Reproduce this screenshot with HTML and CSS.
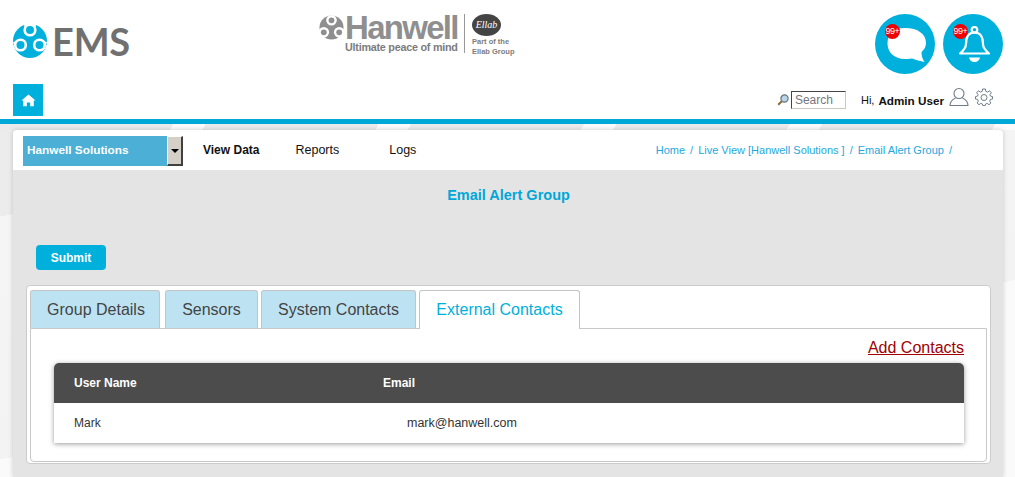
FILE: index.html
```html
<!DOCTYPE html>
<html lang="en">
<head>
    <meta charset="UTF-8">
    <title>Email Alert Group</title>
    <link rel="stylesheet" href="styles.css">
</head>
<body>
    <header class="site-header">
        <div class="brand-row">
            <div class="ems-logo">
                <svg class="ems-mark" viewBox="0 0 34 34" width="34" height="34">
                    <circle cx="17" cy="17" r="17" fill="#00b0dc"/>
                    <path d="M11 0 L23 0 L22 6 L12 6 Z" fill="#fff"/>
                    <path d="M0 18 L4 27 L7 24 L5 17 Z" fill="#fff"/>
                    <path d="M34 18 L30 27 L27 24 L29 17 Z" fill="#fff"/>
                    <circle cx="17" cy="6" r="6.6" fill="#fff"/>
                    <circle cx="17" cy="6" r="4" fill="#00b0dc"/>
                    <circle cx="7.5" cy="21" r="6.6" fill="#fff"/>
                    <circle cx="7.5" cy="21" r="4" fill="#00b0dc"/>
                    <circle cx="26.5" cy="21" r="6.6" fill="#fff"/>
                    <circle cx="26.5" cy="21" r="4" fill="#00b0dc"/>
                </svg>
                <span class="ems-text">EMS</span>
            </div>
            <div class="hanwell-logo">
                <svg class="hanwell-mark" viewBox="0 0 26 26" width="25" height="25">
                    <circle cx="13" cy="13" r="12.5" fill="#8f8f8f"/>
                    <circle cx="13" cy="5.5" r="5.5" fill="#fff"/>
                    <circle cx="13" cy="5.5" r="3" fill="#8f8f8f"/>
                    <circle cx="5" cy="18" r="5.5" fill="#fff"/>
                    <circle cx="5" cy="18" r="3" fill="#8f8f8f"/>
                    <circle cx="21" cy="18" r="5.5" fill="#fff"/>
                    <circle cx="21" cy="18" r="3" fill="#8f8f8f"/>
                </svg>
                <div class="hanwell-words">
                    <div class="hanwell-name">Hanwell</div>
                    <div class="hanwell-tag">Ultimate peace of mind</div>
                </div>
                <div class="ellab">
                    <div class="ellab-badge">Ellab</div>
                    <div class="ellab-note">Part of the<br>Ellab Group</div>
                </div>
            </div>
            <div class="round-icons">
                <div class="round-icon">
                    <span class="count">99+</span>
                    <svg viewBox="0 0 60 60" width="60" height="60">
                        <path d="M30 14 C43 14 51 20 51 29 C51 33 49 36 46.5 38 C46.5 42 47.5 45 49.5 48 C45 47 41 46 37 44.5 C34 45 32 45 30 45 C19 45 12.5 38 12.5 29.5 C12.5 20 19 14 30 14 Z" fill="#fff"/>
                    </svg>
                </div>
                <div class="round-icon">
                    <span class="count">99+</span>
                    <svg viewBox="0 0 60 60" width="60" height="60">
                        <g fill="none" stroke="#fff" stroke-width="2.2">
                            <circle cx="31.5" cy="15.8" r="2.8"/>
                            <path d="M23 30 C23 22 26 18.5 31.5 18.5 C37 18.5 40 22 40 30 C40 34 43 37 46 39.5 L17 39.5 C20 37 23 34 23 30 Z" stroke-linejoin="round"/>
                        </g>
                        <path d="M26 43.5 L37 43.5 C36 47 34 48 31.5 48 C29 48 27 47 26 43.5 Z" fill="#fff"/>
                    </svg>
                </div>
            </div>
        </div>
        <div class="tool-row">
            <a class="home-btn" href="#">
                <svg viewBox="0 0 16 16" width="15" height="15">
                    <path d="M8 1.5 L15.5 8 L13.6 8 L13.6 14 L9.8 14 L9.8 10 L6.2 10 L6.2 14 L2.4 14 L2.4 8 L0.5 8 Z" fill="#fff"/>
                </svg>
            </a>
            <div class="user-tools">
                <svg class="search-icon" viewBox="0 0 12 12" width="12" height="12">
                    <circle cx="7.5" cy="4.5" r="3.6" fill="#b9d6e8" stroke="#66727c" stroke-width="1.2"/>
                    <path d="M4.8 7.2 L1.2 10.8" stroke="#8a6a3a" stroke-width="2"/>
                </svg>
                <input class="search-box" type="text" placeholder="Search">
                <span class="hi">Hi,</span>
                <span class="user-name">Admin User</span>
                <svg class="user-icon" viewBox="0 0 20 20" width="20" height="20">
                    <circle cx="10" cy="6.5" r="5" fill="none" stroke="#6f7c88" stroke-width="1.1"/>
                    <path d="M6.5 11 C3 12.5 1.2 15 1 18.5 L19 18.5 C18.8 15 17 12.5 13.5 11" fill="none" stroke="#6f7c88" stroke-width="1.1"/>
                </svg>
                <svg class="gear-icon" viewBox="0 0 18 18" width="18" height="18">
                    <path d="M7.6 1 L10.4 1 L10.8 3.3 L12.6 4.1 L14.6 2.8 L16.4 4.8 L14.9 6.6 L15.5 8.1 L17.5 8.6 L17.5 11 L15.4 11.4 L14.7 13.1 L15.9 15 L14 16.7 L12.2 15.4 L10.6 16 L10.2 17.6 L7.8 17.6 L7.4 16 L5.8 15.4 L4 16.7 L2.1 15 L3.3 13.1 L2.6 11.4 L0.5 11 L0.5 8.6 L2.5 8.1 L3.1 6.6 L1.6 4.8 L3.4 2.8 L5.4 4.1 L7.2 3.3 Z" fill="none" stroke="#6f7c88" stroke-width="1" stroke-linejoin="round"/>
                    <circle cx="9" cy="9.5" r="3" fill="none" stroke="#6f7c88" stroke-width="1"/>
                </svg>
            </div>
        </div>
    </header>

    <main class="page">
        <nav class="top-nav">
            <div class="site-select">
                <span class="site-name">Hanwell Solutions</span>
                <span class="site-arrow"></span>
            </div>
            <a class="nav-link nav-active" href="#">View Data</a>
            <a class="nav-link nav-reports" href="#">Reports</a>
            <a class="nav-link nav-logs" href="#">Logs</a>
            <div class="crumbs">
                <a href="#">Home</a><span>/</span>
                <a href="#">Live View [Hanwell Solutions ]</a><span>/</span>
                <a href="#">Email Alert Group</a><span>/</span>
            </div>
        </nav>

        <section class="content">
            <h1 class="page-title">Email Alert Group</h1>
            <button class="submit-btn" type="button">Submit</button>

            <div class="tab-box">
                <ul class="tabs">
                    <li class="tab tab-group">Group Details</li>
                    <li class="tab tab-sensors">Sensors</li>
                    <li class="tab tab-system">System Contacts</li>
                    <li class="tab tab-current">External Contacts</li>
                </ul>
                <div class="tab-panel">
                    <div class="add-row"><a class="add-link" href="#">Add Contacts</a></div>
                    <div class="contact-table">
                        <div class="table-head">
                            <div class="col-name">User Name</div>
                            <div class="col-email">Email</div>
                        </div>
                        <div class="table-row">
                            <div class="col-name">Mark</div>
                            <div class="col-email cell-email">mark@hanwell.com</div>
                        </div>
                    </div>
                </div>
            </div>
        </section>
    </main>
</body>
</html>
```

FILE: styles.css
```css
html, body {
    height: 100%;
}

body {
    margin: 0;
    height: 477px;
    overflow: hidden;
    font-family: "Liberation Sans", Arial, sans-serif;
    font-size: 12px;
    color: #111;
    background-color: #ececec;
    /* faint polygon texture behind the card */
    background-image:
        repeating-linear-gradient(120deg, #ebebeb 0 150px, #fbfbfb 150px 178px),
        linear-gradient(170deg, #ececec 33%, #f5f5f5 33%, #f3f3f3 70%, #fafafa 70%);
    background-size: 100% 6px, 100% 100%;
    background-position: 0 124px, 0 0;
    background-repeat: no-repeat;
}

a {
    text-decoration: none;
}

.site-header {
    height: 119px;
    background: #fff;
    border-bottom: 5px solid #00a8d8;
}

.brand-row {
    display: flex;
    height: 84px;
    padding: 0 12px 0 13px;
}

.ems-logo {
    display: flex;
    align-items: center;
    width: 306px;
    height: 81px;
}

.ems-mark {
    flex: none;
}

.ems-text {
    margin-left: 5px;
    font-family: "Lato", sans-serif;
    font-size: 38px;
    font-weight: 700;
    letter-spacing: -0.2px;
    color: #707070;
}

.hanwell-logo {
    display: flex;
    width: 556px;
    padding-top: 14px;
    box-sizing: border-box;
}

.hanwell-mark {
    flex: none;
    margin-top: 1px;
}

.hanwell-words {
    margin-left: 1px;
    width: 119px;
    height: 39px;
    border-right: 1px solid #999;
}

.hanwell-name {
    font-size: 33px;
    line-height: 27px;
    font-weight: 700;
    letter-spacing: -1.7px;
    color: #8f8f8f;
}

.hanwell-tag {
    margin-top: 0;
    font-size: 10.8px;
    line-height: 13px;
    font-weight: 700;
    letter-spacing: -0.25px;
    color: #7c7c7c;
}

.ellab {
    margin-left: 7px;
}

.ellab-badge {
    width: 29px;
    height: 22px;
    border-radius: 50%;
    background: #444;
    color: #fff;
    font-family: "Liberation Serif", serif;
    font-style: italic;
    font-size: 10px;
    line-height: 22px;
    text-align: center;
}

.ellab-note {
    margin-top: 1px;
    font-size: 7.5px;
    line-height: 10px;
    font-weight: 700;
    color: #7c7c7c;
}

.round-icons {
    display: flex;
    gap: 8px;
    padding-top: 14px;
}

.round-icon {
    position: relative;
    width: 60px;
    height: 60px;
    border-radius: 50%;
    background: #00b0dc;
}

.round-icon svg {
    display: block;
}

.count {
    position: absolute;
    top: 10px;
    left: 10px;
    width: 15px;
    height: 15px;
    border-radius: 50%;
    background: #f00000;
    color: #fff;
    font-size: 9px;
    line-height: 15px;
    text-align: center;
    letter-spacing: -0.5px;
}

.tool-row {
    display: flex;
    justify-content: space-between;
    padding: 0 22px 0 13px;
}

.home-btn {
    display: flex;
    align-items: center;
    justify-content: center;
    width: 30px;
    height: 32px;
    background: #00b0dc;
}

.user-tools {
    display: flex;
    align-items: center;
    height: 32px;
}

.search-icon {
    margin-right: 2px;
}

.search-box {
    width: 55px;
    height: 18px;
    padding: 0 0 0 3px;
    box-sizing: border-box;
    border: 1px solid #ccc8c0;
    border-top-color: #444;
    border-left-color: #444;
    border-radius: 0;
    font-family: "Liberation Sans", Arial, sans-serif;
    font-size: 12px;
    background: #fff;
}

.search-box::placeholder {
    color: #77777f;
    opacity: 1;
}

.hi {
    margin-left: 15px;
    font-size: 11px;
}

.user-name {
    margin-left: 4px;
    font-size: 11.7px;
    font-weight: 700;
}

.user-icon {
    margin-left: 5px;
    margin-top: -6px;
}

.gear-icon {
    margin-left: 6px;
    margin-top: -7px;
}

.page {
    margin: 6px 12px 0 13px;
    border-radius: 4px 4px 0 0;
    box-shadow: 0 0 5px rgba(0, 0, 0, 0.18);
}

.top-nav {
    display: flex;
    align-items: center;
    height: 40px;
    padding-left: 10px;
    background: #fff;
    border-radius: 4px 4px 0 0;
}

.site-select {
    display: flex;
    width: 160px;
    height: 30px;
    margin-top: 1px;
    background: #4bafd6;
}

.site-name {
    flex: 1;
    padding-left: 4px;
    color: #fff;
    font-size: 11.8px;
    font-weight: 700;
    line-height: 28px;
}

.site-arrow {
    position: relative;
    width: 16px;
    box-sizing: border-box;
    background: #d4d0c8;
    border: 1px solid #fff;
    border-right: 2px solid #404040;
    border-bottom: 2px solid #404040;
}

.site-arrow::after {
    content: '';
    position: absolute;
    top: 12px;
    left: 3px;
    border-left: 4px solid transparent;
    border-right: 4px solid transparent;
    border-top: 4px solid #000;
}

.nav-link {
    color: #111;
    font-size: 12.5px;
}

.nav-active {
    margin-left: 20px;
    font-weight: 700;
    font-size: 12px;
}

.nav-reports {
    margin-left: 36px;
}

.nav-logs {
    margin-left: 50px;
}

.crumbs {
    display: flex;
    gap: 5px;
    margin-left: auto;
    padding-right: 51px;
    font-size: 11px;
    color: #1ea8de;
}

.crumbs a {
    color: #1ea8de;
}

.content {
    height: 307px;
    padding: 0 12px 0 13px;
    background: #e4e4e4;
}

.page-title {
    margin: 0;
    padding-top: 17px;
    text-align: center;
    font-size: 14.5px;
    line-height: 16px;
    font-weight: 700;
    color: #00a8d8;
}

.submit-btn {
    display: block;
    margin: 42px 0 0 10px;
    width: 70px;
    height: 25px;
    padding: 0;
    border: none;
    border-radius: 4px;
    background: #00b0dc;
    color: #fff;
    font-family: "Liberation Sans", Arial, sans-serif;
    font-size: 12px;
    font-weight: 700;
}

.tab-box {
    margin-top: 15px;
    height: 179px;
    box-sizing: border-box;
    padding: 4px 3px 3px;
    background: #fff;
    border: 1px solid #ccc;
    border-radius: 4px;
}

.tabs {
    display: flex;
    height: 38px;
    margin: 0;
    padding: 0;
    list-style: none;
}

.tab {
    box-sizing: border-box;
    height: 38px;
    padding-top: 10px;
    text-align: center;
    font-size: 16px;
    line-height: 18px;
    color: #444;
    background: #bde3f3;
    border: 1px solid #c4c4c4;
    border-bottom: none;
    border-radius: 3px 3px 0 0;
}

.tab-group {
    width: 130px;
    margin-right: 5px;
    padding-left: 2px;
}

.tab-sensors {
    width: 93px;
    margin-right: 3px;
}

.tab-system {
    width: 155px;
    margin-right: 3px;
}

.tab-current {
    position: relative;
    z-index: 1;
    width: 161px;
    height: 39px;
    color: #00b0dc;
    background: #fff;
}

.tab-panel {
    height: 134px;
    box-sizing: border-box;
    padding: 0 22px 0 23px;
    border: 1px solid #c8c8c8;
    border-radius: 0 0 4px 4px;
}

.add-row {
    height: 34px;
    padding-top: 10px;
    box-sizing: border-box;
    text-align: right;
}

.add-link {
    color: #a00000;
    font-size: 16px;
    line-height: 18px;
    text-decoration: underline;
}

.contact-table {
    border-radius: 5px 5px 0 0;
    background: #fff;
    box-shadow: 0 1px 5px rgba(0, 0, 0, 0.4);
}

.table-head,
.table-row {
    display: flex;
    height: 40px;
    align-items: center;
    padding-left: 20px;
}

.table-head {
    background: #4c4c4c;
    border-radius: 5px 5px 0 0;
    color: #fff;
    font-weight: 700;
}

.table-row {
    color: #333;
}

.col-name {
    width: 309px;
}

.cell-email {
    padding-left: 24px;
    font-size: 12.5px;
}
```
